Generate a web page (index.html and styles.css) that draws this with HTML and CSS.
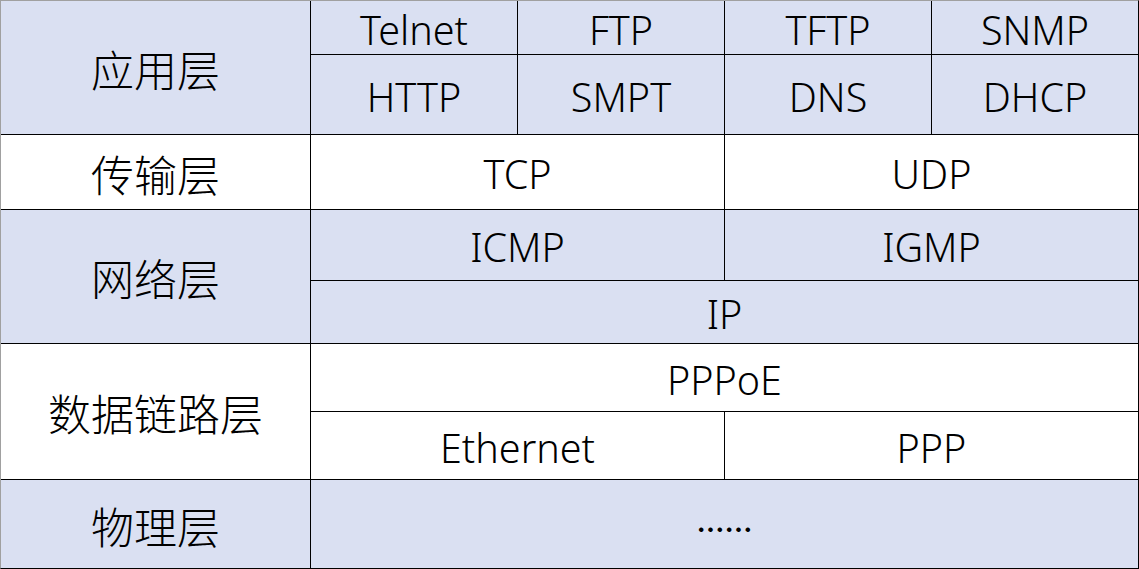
FILE: index.html
```html
<!DOCTYPE html>
<html lang="zh">
<head>
<meta charset="utf-8">
<title>TCP/IP 协议分层</title>
<link rel="stylesheet" href="styles.css">
</head>
<body>
<div class="stack">
  <div class="cell label blue r-app">应用层</div>
  <div class="cell blue">Telnet</div>
  <div class="cell blue">FTP</div>
  <div class="cell blue">TFTP</div>
  <div class="cell blue">SNMP</div>
  <div class="cell blue">HTTP</div>
  <div class="cell blue">SMPT</div>
  <div class="cell blue">DNS</div>
  <div class="cell blue">DHCP</div>

  <div class="cell label white">传输层</div>
  <div class="cell white half">TCP</div>
  <div class="cell white half">UDP</div>

  <div class="cell label blue r-net">网络层</div>
  <div class="cell blue half">ICMP</div>
  <div class="cell blue half">IGMP</div>
  <div class="cell blue full">IP</div>

  <div class="cell label white r-link">数据链路层</div>
  <div class="cell white full">PPPoE</div>
  <div class="cell white half">Ethernet</div>
  <div class="cell white half">PPP</div>

  <div class="cell label blue">物理层</div>
  <div class="cell blue full dots">……</div>
</div>
</body>
</html>
```
FILE: styles.css
```css
html, body {
  margin: 0;
  padding: 0;
  background: #ffffff;
}

.stack {
  width: 1139px;
  height: 569px;
  box-sizing: border-box;
  border-top: 1px solid #a0a0a0;
  border-left: 1px solid #a0a0a0;
  border-right: 1px solid #000000;
  border-bottom: 1px solid #000000;
  background: #000000;
  display: grid;
  grid-template-columns: 309px 206px 206px 206px 206px;
  grid-template-rows: 53px 79px 74px 70px 62px 67px 67px 88px;
  gap: 1px;
  font-family: "Noto Sans", "Noto Sans CJK SC", sans-serif;
  font-weight: 350;
  font-size: 39.5px;
  color: #000000;
}

.cell {
  display: flex;
  align-items: center;
  justify-content: center;
  line-height: 1;
  white-space: nowrap;
  padding-top: 6px;
}

.blue { background: #dae0f2; }
.white { background: #ffffff; }

.label {
  grid-column: 1;
  font-family: "Noto Sans CJK SC", sans-serif;
  font-weight: 300;
  font-size: 43px;
  padding-top: 2px;
}

.r-app { grid-row: 1 / span 2; }
.r-net { grid-row: 4 / span 2; }
.r-link { grid-row: 6 / span 2; }

.half { grid-column: span 2; }
.full { grid-column: span 4; }

.dots {
  font-family: "Noto Sans CJK SC", sans-serif;
  font-weight: 700;
  font-size: 28px;
  padding-top: 10px;
}
```
